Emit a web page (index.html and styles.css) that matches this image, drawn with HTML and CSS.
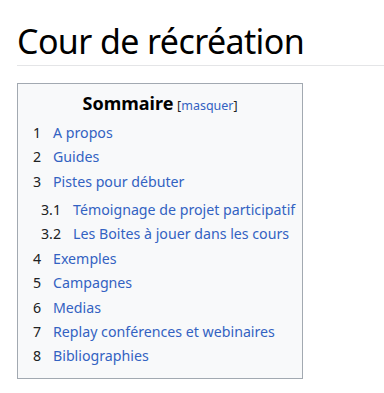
FILE: index.html
```html
<!DOCTYPE html>
<html lang="fr">
<head>
<meta charset="utf-8">
<link rel="stylesheet" href="styles.css">
</head>
<body>
<div class="content">
  <h1 class="title">Cour de récréation</h1>
  <div class="toc">
    <div class="toc-title"><h2>Sommaire</h2> <span class="toggle">[<a href="#">masquer</a>]</span></div>
    <ul class="lvl1">
      <li><span class="num">1</span><a href="#">A propos</a></li>
      <li><span class="num">2</span><a href="#">Guides</a></li>
      <li><span class="num">3</span><a href="#">Pistes pour débuter</a>
        <ul class="lvl2">
          <li><span class="num">3.1</span><a href="#">Témoignage de projet participatif</a></li>
          <li><span class="num">3.2</span><a href="#">Les Boites à jouer dans les cours</a></li>
        </ul>
      </li>
      <li><span class="num">4</span><a href="#">Exemples</a></li>
      <li><span class="num">5</span><a href="#">Campagnes</a></li>
      <li><span class="num">6</span><a href="#">Medias</a></li>
      <li><span class="num">7</span><a href="#">Replay conférences et webinaires</a></li>
      <li><span class="num">8</span><a href="#">Bibliographies</a></li>
    </ul>
  </div>
</div>
</body>
</html>
```
FILE: styles.css
```css
html, body {
  margin: 0;
  padding: 0;
  background: #fff;
}
body {
  font-family: "Noto Sans", "Open Sans", sans-serif;
  color: #202122;
}
.content {
  padding: 0 0 0 17px;
}
.title {
  font-family: "Noto Sans", sans-serif;
  font-weight: normal;
  font-size: 34px;
  letter-spacing: -0.6px;
  line-height: 1.3;
  color: #000;
  margin: 0;
  padding: 19px 0 2px;
  border-bottom: 1px solid #e4e5e7;
}
.toc {
  display: inline-block;
  margin-top: 17px;
  background: #f8f9fa;
  border: 1px solid #a2a9b1;
  padding: 7px 7px 9px 7px;
  font-size: 14.2px;
}
.toc-title {
  text-align: center;
  line-height: 24px;
  margin-bottom: 3px;
}
.toc-title h2 {
  display: inline;
  font-size: 18px;
  font-weight: bold;
  color: #000;
  margin: 0;
}
.toggle {
  font-size: 12.5px;
  color: #202122;
}
a {
  color: #3362c2;
  text-decoration: none;
}
ul {
  list-style: none;
  margin: 0;
  padding: 0;
}
.lvl1 {
  margin-left: 8px;
}
.lvl1 > li {
  line-height: 24.3px;
}
.lvl2 {
  margin: 3.5px 0 1.5px 8px;
}
.lvl2 > li {
  line-height: 24px;
}
.num {
  display: inline-block;
  color: #202122;
  padding-right: 8px;
  min-width: 12px;
}
.lvl2 .num {
  min-width: 24px;
}
```
